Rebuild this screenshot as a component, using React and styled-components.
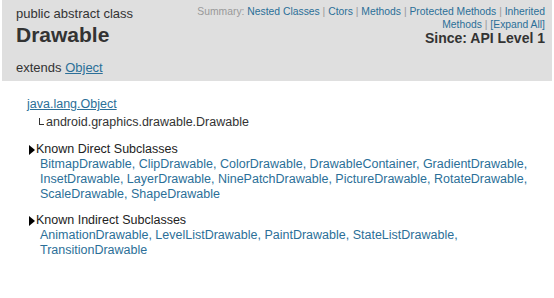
import React from "react";
import styled, { createGlobalStyle } from "styled-components";

const Global = createGlobalStyle`
  html, body { margin: 0; padding: 0; background: #fff; }
  body { font-family: "Liberation Sans", Arial, sans-serif; color: #333; }
`;

const Page = styled.div`
  width: 554px;
  height: 298px;
  overflow: hidden;
`;

const Header = styled.div`
  margin: 0 2px;
  height: 81px;
  background: #dfdfdf;
  display: flex;
  justify-content: space-between;
  padding: 0 7px 0 14px;
  box-sizing: border-box;
`;

const TitleBlock = styled.div`
  display: flex;
  flex-direction: column;
  padding-top: 6px;
`;

const Kind = styled.div`
  font-size: 13px;
  line-height: 16px;
`;

const ClassName = styled.h1`
  margin: 0;
  font-size: 21px;
  line-height: 26px;
  font-weight: bold;
  color: #333;
`;

const Extends = styled.div`
  margin-top: 12px;
  font-size: 13px;
  line-height: 16px;
`;

const Link = styled.a`
  color: #2b6f98;
  text-decoration: ${(p) => (p.$underline ? "underline" : "none")};
  cursor: pointer;
`;

const SideBlock = styled.div`
  display: flex;
  flex-direction: column;
  align-items: flex-end;
  padding-top: 5px;
`;

const Summary = styled.div`
  width: 356px;
  text-align: right;
  font-size: 10.35px;
  line-height: 13px;
  color: #999;
`;

const Sep = styled.span`
  color: #999;
`;

const Since = styled.div`
  margin-top: -1px;
  font-size: 14px;
  line-height: 17px;
  font-weight: bold;
  color: #333;
`;

const Body = styled.div`
  padding: 16px 0 0 27px;
  font-size: 12.5px;
  line-height: 15px;
`;

const Hierarchy = styled.div`
  display: flex;
  flex-direction: column;
`;

const SubRow = styled.div`
  display: flex;
  align-items: baseline;
  margin-top: 3px;
  padding-left: 12px;
  color: #333;
`;

const Corner = styled.span`
  display: inline-block;
  width: 4px;
  height: 6px;
  border-left: 1px solid #333;
  border-bottom: 1px solid #333;
  margin-right: 2px;
  transform: translateY(-1px);
`;

const Section = styled.div`
  margin-top: ${(p) => p.$gap}px;
`;

const SectionTitle = styled.div`
  display: flex;
  align-items: center;
  padding-left: 2px;
  color: #222;
`;

const Triangle = styled.span`
  display: inline-block;
  width: 0;
  height: 0;
  border-top: 5px solid transparent;
  border-bottom: 5px solid transparent;
  border-left: 6px solid #000;
  margin-right: 1px;
`;

const LinkList = styled.div`
  padding-left: 13px;
  width: 500px;
  color: #2b6f98;
`;

const direct = [
  "BitmapDrawable",
  "ClipDrawable",
  "ColorDrawable",
  "DrawableContainer",
  "GradientDrawable",
  "InsetDrawable",
  "LayerDrawable",
  "NinePatchDrawable",
  "PictureDrawable",
  "RotateDrawable",
  "ScaleDrawable",
  "ShapeDrawable",
];

const indirect = [
  "AnimationDrawable",
  "LevelListDrawable",
  "PaintDrawable",
  "StateListDrawable",
  "TransitionDrawable",
];

const summary = [
  "Nested Classes",
  "Ctors",
  "Methods",
  "Protected Methods",
  "Inherited Methods",
  "[Expand All]",
];

function List({ items }) {
  return (
    <LinkList>
      {items.map((n, i) => (
        <React.Fragment key={n}>
          <Link>{n}</Link>
          {i < items.length - 1 ? ", " : ""}
        </React.Fragment>
      ))}
    </LinkList>
  );
}

export default function App() {
  return (
    <Page>
      <Global />
      <Header>
        <TitleBlock>
          <Kind>public abstract class</Kind>
          <ClassName>Drawable</ClassName>
          <Extends>
            extends <Link $underline>Object</Link>
          </Extends>
        </TitleBlock>
        <SideBlock>
          <Summary>
            Summary:{" "}
            {summary.map((s, i) => (
              <React.Fragment key={s}>
                <Link>{s}</Link>
                {i < summary.length - 1 ? <Sep> | </Sep> : null}
              </React.Fragment>
            ))}
          </Summary>
          <Since>Since: API Level 1</Since>
        </SideBlock>
      </Header>
      <Body>
        <Hierarchy>
          <Link $underline>java.lang.Object</Link>
          <SubRow>
            <Corner />
            android.graphics.drawable.Drawable
          </SubRow>
        </Hierarchy>
        <Section $gap={12}>
          <SectionTitle>
            <Triangle />
            Known Direct Subclasses
          </SectionTitle>
          <List items={direct} />
        </Section>
        <Section $gap={11}>
          <SectionTitle>
            <Triangle />
            Known Indirect Subclasses
          </SectionTitle>
          <List items={indirect} />
        </Section>
      </Body>
    </Page>
  );
}
